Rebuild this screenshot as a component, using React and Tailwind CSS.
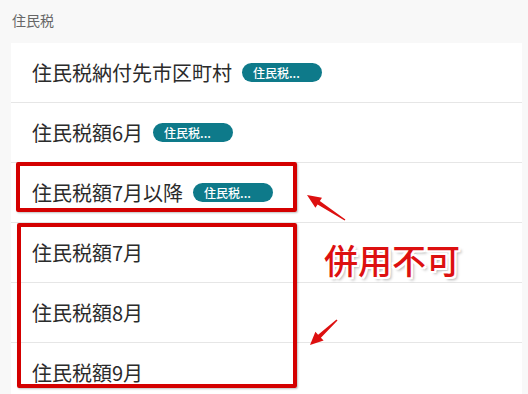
import React from "react";

const FONT = { fontFamily: '"Noto Sans CJK JP", "Noto Sans", sans-serif' };

function Badge() {
  return (
    <span className="inline-flex h-[19px] w-[80px] shrink-0 items-center rounded-full bg-[#0e7a8a] pl-[11px] text-[12px] font-medium leading-none text-white">
      住民税...
    </span>
  );
}

function Row({ label, badge }) {
  return (
    <div className="flex h-[60px] items-center gap-[10px] border-b border-[#e6e6e6] pl-[21px]">
      <span className="text-[20px] leading-none text-[#2b2b2b]">{label}</span>
      {badge && <Badge />}
    </div>
  );
}

export default function App() {
  const rows = [
    { label: "住民税納付先市区町村", badge: true },
    { label: "住民税額6月", badge: true },
    { label: "住民税額7月以降", badge: true },
    { label: "住民税額7月" },
    { label: "住民税額8月" },
    { label: "住民税額9月" },
  ];
  return (
    <div className="relative h-[394px] w-[528px] overflow-hidden bg-[#f8f8f8]" style={FONT}>
      <div className="flex h-[43px] items-center pl-[12px] pb-[2px] text-[14px] text-[#666]">住民税</div>
      <div className="ml-[11px] w-[511px] bg-white">
        {rows.map((r, i) => (
          <Row key={i} label={r.label} badge={r.badge} />
        ))}
      </div>

      {/* annotation boxes */}
      <div className="absolute left-[16px] top-[162px] h-[50px] w-[281px] rounded-[2px] border-[4px] border-[#d40000] shadow-[1px_1px_2px_rgba(0,0,0,0.25)]" />
      <div className="absolute left-[17px] top-[223px] h-[165px] w-[280px] rounded-[2px] border-[4px] border-[#d40000] shadow-[1px_1px_2px_rgba(0,0,0,0.25)]" />

      <div className="absolute left-[324px] top-[237px] text-[34px] font-medium leading-[46px] text-[#dd1010] [text-shadow:2px_0_0_#fff,-2px_0_0_#fff,0_2px_0_#fff,0_-2px_0_#fff,2px_2px_0_#fff,-2px_-2px_0_#fff,2px_-2px_0_#fff,-2px_2px_0_#fff,3px_3px_3px_rgba(0,0,0,0.3)]">
        併用不可
      </div>

      <svg className="pointer-events-none absolute left-0 top-0" width="528" height="394">
        <polygon
          points="345.4,219.4 319.8,201.0 322,197.7 307,195 315.4,207.7 317.6,204.4 344.6,220.6"
          fill="#dd1010"
        />
        <polygon
          points="337.5,320.5 320.9,337.7 323.6,340.6 310,345 315.4,331.8 318.1,334.7 336.5,319.5"
          fill="#dd1010"
        />
      </svg>
    </div>
  );
}
